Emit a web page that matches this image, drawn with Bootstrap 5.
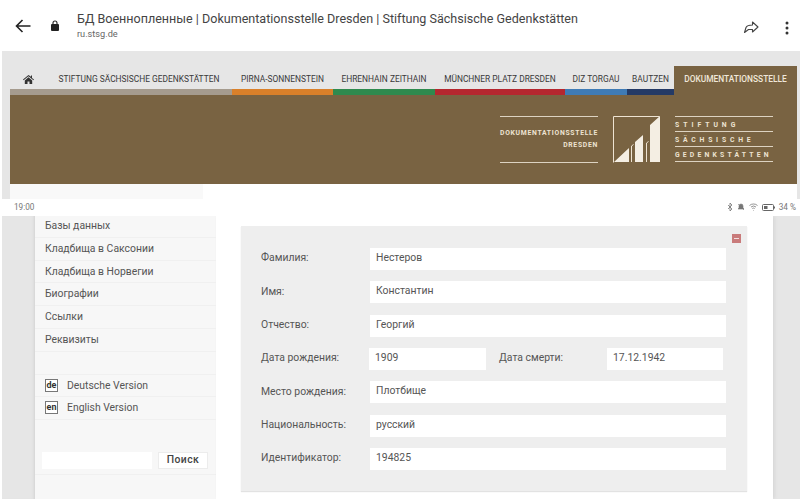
<!DOCTYPE html>
<html lang="ru">
<head>
<meta charset="utf-8">
<meta name="viewport" content="width=device-width,initial-scale=1">
<title>БД Военнопленные</title>
<link href="https://cdn.jsdelivr.net/npm/bootstrap@5.3.5/dist/css/bootstrap.min.css" rel="stylesheet">
<style>
html, body { height: 499px; overflow: hidden; background: #fff; }
body { font-family: Roboto, "Liberation Sans", sans-serif; font-size: 10.4px; color: #555; }
.shot-top { height: 199px; }
.browser-bar { height: 51px; }
.back-btn { width: 20px; margin-left: 13px; }
.lock-ic { margin-left: 18px; margin-right: 18px; }
.page-title { font-size: 12.55px; line-height: 15px; color: #444; margin-top: 1px; }
.page-url { font-size: 9.2px; line-height: 15px; color: #666; }
.bar-actions { gap: 26px; margin-right: 11px; margin-top: 4px; }
.site-top { height: 148px; margin-left: 2px; background: #e6e6e6; padding: 0 3px 0 8px; }
.site-nav { height: 44px; }
.site-nav a { display: flex; align-items: center; justify-content: center; height: 100%; padding-top: 18px; border-bottom: 6px solid #a59b8e; color: #3a3a3a; font-size: 8.4px; white-space: nowrap; text-decoration: none; }
.home-link { width: 36px; }
.n-stiftung { width: 186px; }
.n-pirna { width: 101px; border-bottom-color: #d9802a !important; }
.n-ehren { width: 102px; border-bottom-color: #2f8a4e !important; }
.n-platz { width: 130px; border-bottom-color: #b5272f !important; }
.n-torgau { width: 62px; border-bottom-color: #3f7bb5 !important; }
.n-bautzen { width: 47px; border-bottom-color: #243a66 !important; }
.n-doku { width: 123px; height: 29px !important; background: #796342; color: #f0e8da !important; font-weight: 500; border-bottom: 0 !important; padding: 0 0 3px !important; }
.hero { height: 89px; background: #796342; color: #eee3d2; padding: 21px 24px 0 0; gap: 15px; }
.hero-left { width: 98px; height: 47px; border-top: 1px solid #ddd3c2; border-bottom: 1px solid #ddd3c2; font-size: 6.8px; font-weight: 700; letter-spacing: .72px; line-height: 12px; text-align: right; padding-top: 10px; white-space: nowrap; }
.hero-right { width: 98px; font-size: 6.8px; font-weight: 700; white-space: nowrap; border-top: 1px solid #ddd3c2; }
.hero-right div { height: 15px; line-height: 14px; padding-top: 1px; border-bottom: 1px solid #ddd3c2; }
.sp-a { letter-spacing: 4px; }
.sp-b { letter-spacing: 3.8px; }
.sp-c { letter-spacing: 3.2px; }
.stub-row { height: 15px; background: #fff; }
.stub-side { width: 193px; background: #f9f9f9; }
.status-row { height: 17px; padding: 0 4px 0 14px; font-size: 8.2px; color: #777; }
.shot-low { height: 283px; margin-left: 2px; background: #e6e6e6; overflow: hidden; }
.side-gutter { width: 33px; box-shadow: inset -3px 0 3px -2px #d2d2d2; }
.side-menu { width: 181px; background: #f7f7f7; }
.side-menu .list-group { margin-top: -1px; }
.side-menu .list-group-item { height: 22.8px; padding: 0 10px; background: transparent; border-color: #f0f0f0; color: #555; font-size: 10.4px; line-height: 21px; display: flex; gap: 9px; }
.lang-tag { width: 13px; height: 13px; margin-top: 4px; border: 1px solid #777; background: #fff; color: #333; font-size: 9px; font-weight: 700; line-height: 11px; text-align: center; flex: none; }
.side-search { height: 32.3px; padding: 9px 7px 0 6.500px; gap: 6.500px; border-bottom: 1px solid #f0f0f0; }
.side-search input { width: 110px; height: 17px; border: 0; background: #fff; }
.side-search button { width: 50px; height: 17px; padding: 0; border: 1px solid #ececec; border-radius: 0; background: #fff; color: #444; font-size: 10.4px; font-weight: 500; letter-spacing: .4px; line-height: 14px; }
.main-pane { width: 557px; background: #fff; padding: 10px 26px 0 25px; box-shadow: 2px 0 3px #d8d8d8; }
.form-panel { position: relative; height: 265px; background: #eee; padding: 22px 20px 0 20px; box-shadow: 0 1px 1px #e2e2e2; }
.minus-btn { position: absolute; top: 8px; right: 6px; width: 9px; height: 9px; background: #c97b7b; }
.minus-btn::after { content: ""; position: absolute; left: 2px; right: 2px; top: 4px; height: 1px; background: #f3dede; }
.form-line { height: 22px; margin-bottom: 11.33px; align-items: center; }
.f-label { width: 109px; flex: none; color: #555; margin-top: -2px; }
.f-value { height: 22px; padding: 0 6px; line-height: 20px; background: #fff; color: #555; }
.f-wide { width: 356px; }
.f-dob { width: 117px; margin-left: -1px; }
.f-dlabel { width: 108px; margin-left: 13px; flex: none; }
.f-death { width: 116px; }
</style>
</head>
<body>
<div class="shot-top d-flex flex-column">
	<div class="browser-bar d-flex align-items-center">
		<svg class="back-btn" width="17" height="14" viewBox="0 0 17 14"><path d="M16 7H2M8 1L2 7l6 6" fill="none" stroke="#222" stroke-width="1.6"/></svg>
		<svg class="lock-ic flex-none" width="8" height="11" viewBox="0 0 8 11"><path d="M2 4.500V3a2 2 0 0 1 4 0v1.500" fill="none" stroke="#222" stroke-width="1.100"/><rect y="4" width="8" height="7" rx="1" fill="#222"/></svg>
		<div class="flex-grow-1">
			<div class="page-title">БД Военнопленные | Dokumentationsstelle Dresden | Stiftung Sächsische Gedenkstätten</div>
			<div class="page-url">ru.stsg.de</div>
		</div>
		<div class="bar-actions d-flex align-items-center">
			<svg width="16" height="13" viewBox="0 0 16 13"><path d="M9.500 1l5.500 5-5.500 5V8.500H5.500L1.500 11.500 3 6.500c.7-1.500 2-2.500 6.500-2.500z" fill="none" stroke="#444" stroke-width="1.100" stroke-linejoin="round"/></svg>
			<svg width="4" height="14" viewBox="0 0 4 14"><circle cx="2" cy="2" r="1.500" fill="#333"/><circle cx="2" cy="7" r="1.500" fill="#333"/><circle cx="2" cy="12" r="1.500" fill="#333"/></svg>
		</div>
	</div>
	<div class="site-top">
		<nav class="site-nav d-flex align-items-end">
			<a class="home-link" href="#"><svg width="11" height="9" viewBox="0 0 11 9"><path d="M5.500 0L0 4.600l.6.700L5.500 1.300l4.900 4 .6-.7-2-1.700V.6H8v1.100zM1.800 5.400V9h2.700V6.400h2V9h2.700V5.400L5.500 2.300z" fill="#333"/></svg></a>
			<a class="n-stiftung" href="#">STIFTUNG SÄCHSISCHE GEDENKSTÄTTEN</a>
			<a class="n-pirna" href="#">PIRNA-SONNENSTEIN</a>
			<a class="n-ehren" href="#">EHRENHAIN ZEITHAIN</a>
			<a class="n-platz" href="#">MÜNCHNER PLATZ DRESDEN</a>
			<a class="n-torgau" href="#">DIZ TORGAU</a>
			<a class="n-bautzen" href="#">BAUTZEN</a>
			<a class="n-doku" href="#">DOKUMENTATIONSSTELLE</a>
		</nav>
		<div class="hero d-flex justify-content-end">
			<div class="hero-left">DOKUMENTATIONSSTELLE<br>DRESDEN</div>
			<svg width="47" height="47" viewBox="0 0 47 47" class="flex-none"><path d="M.5 46.500V.5h46" fill="none" stroke="#eee3d2"/><path d="M1 46L16 32v14zM22 26l8-7v27h-8zM37 9L47 0v46H37z" fill="#f4eee3"/><path d="M18.500 46V30l2-1.500M33.500 46V27l2-1.500" fill="none" stroke="#eee3d2"/></svg>
			<div class="hero-right">
				<div class="sp-a">STIFTUNG</div>
				<div class="sp-b">SÄCHSISCHE</div>
				<div class="sp-c">GEDENKSTÄTTEN</div>
			</div>
		</div>
		<div class="stub-row"><div class="stub-side h-100"></div></div>
	</div>
</div>
<div class="status-row d-flex align-items-center justify-content-between">
	<span>19:00</span>
	<span class="d-flex align-items-center gap-1">
		<svg width="6" height="8" viewBox="0 0 6 8"><path d="M1 2l4 4-2 2V0l2 2-4 4" fill="none" stroke="#666" stroke-width=".7"/></svg>
		<svg width="8" height="8" viewBox="0 0 8 8"><path d="M4 1a2 2 0 0 1 2 2v2l1 1H1l1-1V3a2 2 0 0 1 2-2zM1 1l6 6" fill="#777" stroke="#777" stroke-width=".6"/></svg>
		<svg width="9" height="8" viewBox="0 0 9 8"><path d="M.5 2.500a6 6 0 0 1 8 0M2 4a4 4 0 0 1 5 0M3.300 5.500a2 2 0 0 1 2.400 0M4.500 7v.5" fill="none" stroke="#777" stroke-width=".8"/></svg>
		<svg width="13" height="7" viewBox="0 0 13 7"><rect x=".5" y=".5" width="11" height="6" rx="1" fill="none" stroke="#666"/><rect x="2" y="2" width="3.500" height="3" fill="#666"/><rect x="12" y="2.500" width="1" height="2" fill="#666"/></svg>
		<span>34 %</span>
	</span>
</div>
<div class="shot-low d-flex">
	<div class="side-gutter"></div>
	<aside class="side-menu">
		<div class="list-group list-group-flush">
			<a class="list-group-item" href="#">Базы данных</a>
			<a class="list-group-item" href="#">Кладбища в Саксонии</a>
			<a class="list-group-item" href="#">Кладбища в Норвегии</a>
			<a class="list-group-item" href="#">Биографии</a>
			<a class="list-group-item" href="#">Ссылки</a>
			<a class="list-group-item" href="#">Реквизиты</a>
			<div class="list-group-item"></div>
			<a class="list-group-item" href="#"><span class="lang-tag">de</span>Deutsche Version</a>
			<a class="list-group-item" href="#"><span class="lang-tag">en</span>English Version</a>
			<div class="list-group-item"></div>
		</div>
		<form class="side-search d-flex">
			<input type="text" aria-label="Поиск">
			<button type="button" class="btn">Поиск</button>
		</form>
	</aside>
	<main class="main-pane">
		<div class="form-panel">
			<span class="minus-btn"></span>
			<div class="form-line d-flex"><span class="f-label">Фамилия:</span><div class="f-value f-wide">Нестеров</div></div>
			<div class="form-line d-flex"><span class="f-label">Имя:</span><div class="f-value f-wide">Константин</div></div>
			<div class="form-line d-flex"><span class="f-label">Отчество:</span><div class="f-value f-wide">Георгий</div></div>
			<div class="form-line d-flex"><span class="f-label">Дата рождения:</span><div class="f-value f-dob">1909</div><span class="f-label f-dlabel">Дата смерти:</span><div class="f-value f-death">17.12.1942</div></div>
			<div class="form-line d-flex"><span class="f-label">Место рождения:</span><div class="f-value f-wide">Плотбище</div></div>
			<div class="form-line d-flex"><span class="f-label">Национальность:</span><div class="f-value f-wide">русский</div></div>
			<div class="form-line d-flex"><span class="f-label">Идентификатор:</span><div class="f-value f-wide">194825</div></div>
		</div>
	</main>
</div>
<script src="https://cdn.jsdelivr.net/npm/bootstrap@5.3.5/dist/js/bootstrap.bundle.min.js"></script>
</body>
</html>
